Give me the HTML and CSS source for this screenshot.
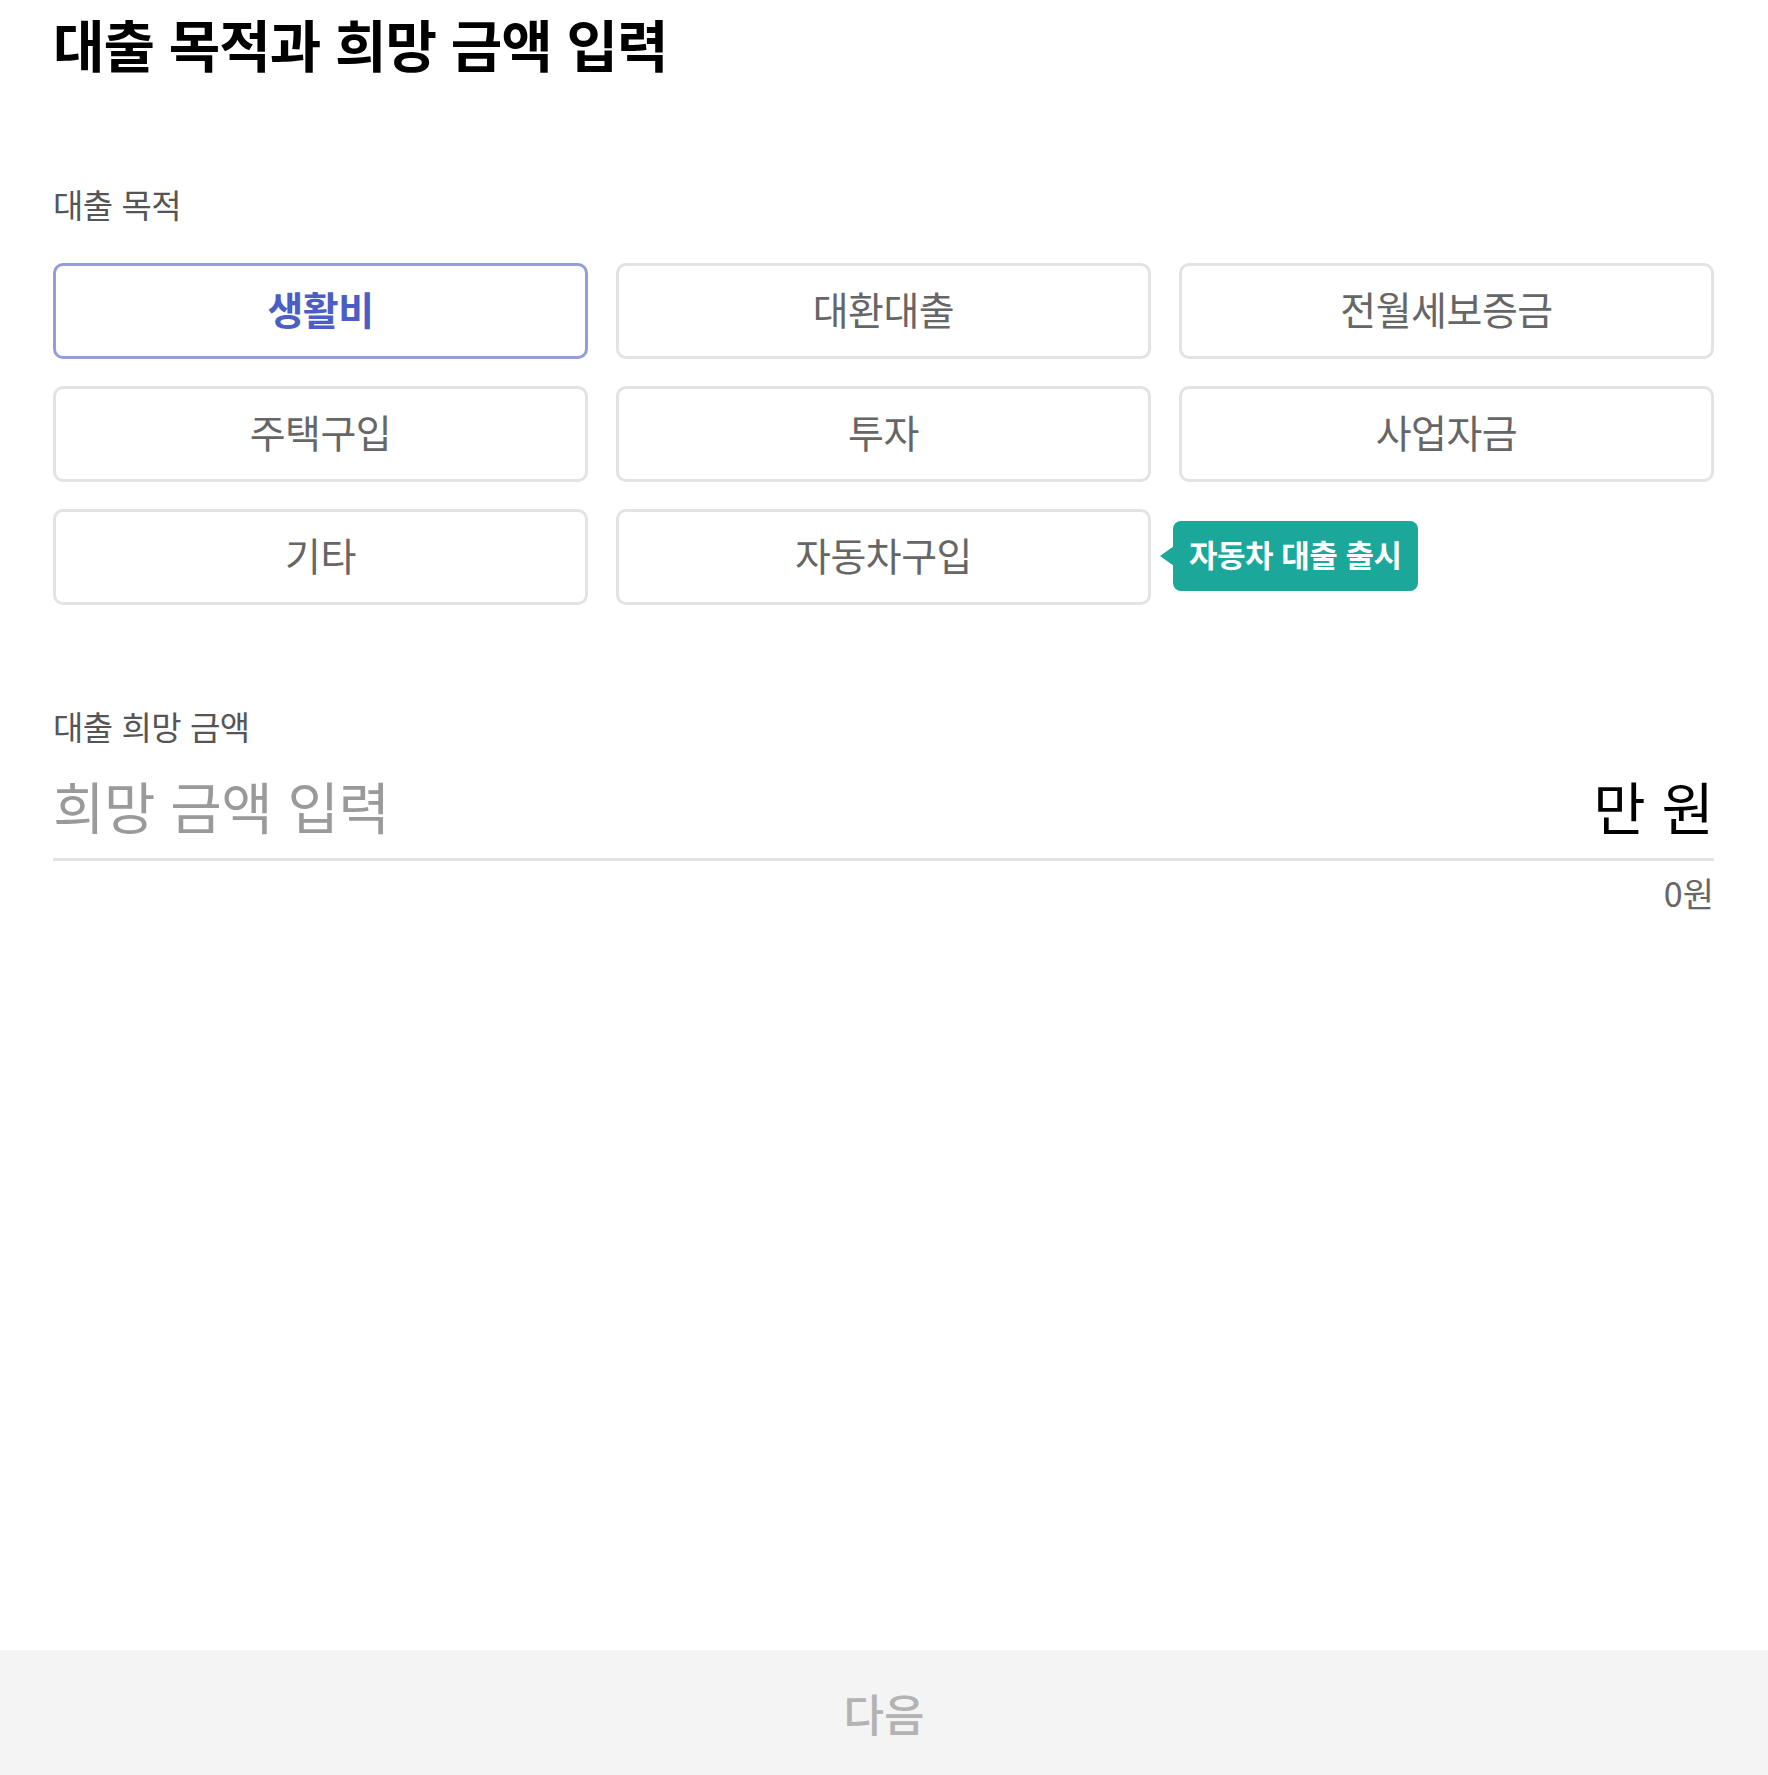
FILE: index.html
```html
<!DOCTYPE html>
<html lang="ko">
<head>
    <meta charset="utf-8">
    <link rel="stylesheet" href="styles.css">
</head>
<body>
    <div id="main">
        <h1 class="page-title">대출 목적과 희망 금액 입력</h1>

        <p class="field-label purpose-label">대출 목적</p>
        <div class="purpose-grid">
            <button class="purpose selected">생활비</button>
            <button class="purpose">대환대출</button>
            <button class="purpose">전월세보증금</button>
            <button class="purpose">주택구입</button>
            <button class="purpose">투자</button>
            <button class="purpose">사업자금</button>
            <button class="purpose">기타</button>
            <button class="purpose">자동차구입</button>
            <div class="new-tip">자동차 대출 출시</div>
        </div>

        <p class="field-label amount-label">대출 희망 금액</p>
        <div class="amount-row">
            <input class="amount-input" type="text" placeholder="희망 금액 입력">
            <span class="amount-unit">만 원</span>
        </div>
        <p class="amount-total">0원</p>
    </div>

    <div id="bottom-bar">
        <button class="next-button">다음</button>
    </div>
</body>
</html>
```

FILE: styles.css
```css
body {
    margin: 0;
    padding: 0;
    min-height: 100vh;
    display: flex;
    flex-direction: column;
    background-color: white;
    font-family: "Noto Sans CJK KR", "Noto Sans", sans-serif;
}

#main {
    flex: 1;
    padding: 0 54px 0 53px;
}

.page-title {
    margin: 0;
    padding-top: 10px;
    font-size: 56px;
    line-height: 66px;
    font-weight: 700;
    color: #000;
    letter-spacing: -1px;
}

.field-label {
    margin: 0;
    font-size: 33px;
    line-height: 40px;
    color: #555;
    letter-spacing: -0.5px;
}

.purpose-label {
    margin-top: 108px;
}

.purpose-grid {
    margin-top: 39px;
    display: grid;
    grid-template-columns: repeat(3, 1fr);
    grid-auto-rows: 96px;
    gap: 27px 28px;
}

.purpose {
    padding: 0 0 6px;
    font-family: inherit;
    font-size: 39px;
    color: #666;
    background-color: white;
    border: 3px solid #e3e3e3;
    border-radius: 10px;
    letter-spacing: -0.5px;
    cursor: pointer;
}

.purpose.selected {
    border-color: #939dd6;
    color: #4b5dc6;
    font-weight: 700;
}

.new-tip {
    position: relative;
    align-self: center;
    justify-self: start;
    margin-left: -6px;
    margin-top: -3px;
    height: 70px;
    padding: 0 16px 4px;
    box-sizing: border-box;
    display: flex;
    align-items: center;
    background-color: #1ba89a;
    color: white;
    font-size: 31px;
    font-weight: 700;
    border-radius: 8px;
    letter-spacing: -0.5px;
}

.new-tip::before {
    content: "";
    position: absolute;
    left: -13px;
    top: 50%;
    margin-top: -10px;
    border-style: solid;
    border-width: 10px 14px 10px 0;
    border-color: transparent #1ba89a transparent transparent;
}

.amount-label {
    margin-top: 101px;
}

.amount-row {
    margin-top: 24px;
    display: flex;
    align-items: center;
    border-bottom: 3px solid #e3e3e3;
    padding-bottom: 18px;
}

.amount-input {
    flex: 1;
    min-width: 0;
    border: none;
    outline: none;
    padding: 0;
    font-family: inherit;
    font-size: 56px;
    line-height: 70px;
    height: 70px;
    color: #000;
    letter-spacing: -0.5px;
}

.amount-input::placeholder {
    color: #9a9a9a;
}

.amount-unit {
    font-size: 57px;
    line-height: 70px;
    color: #000;
}

.amount-total {
    margin: 12px 0 0;
    text-align: right;
    font-size: 34px;
    line-height: 40px;
    color: #666;
}

#bottom-bar {
    height: 125px;
    background-color: #f4f4f4;
    display: flex;
}

.next-button {
    flex: 1;
    border: none;
    background: none;
    font-family: inherit;
    font-size: 44px;
    font-weight: 500;
    color: #b3b3b3;
}
```
